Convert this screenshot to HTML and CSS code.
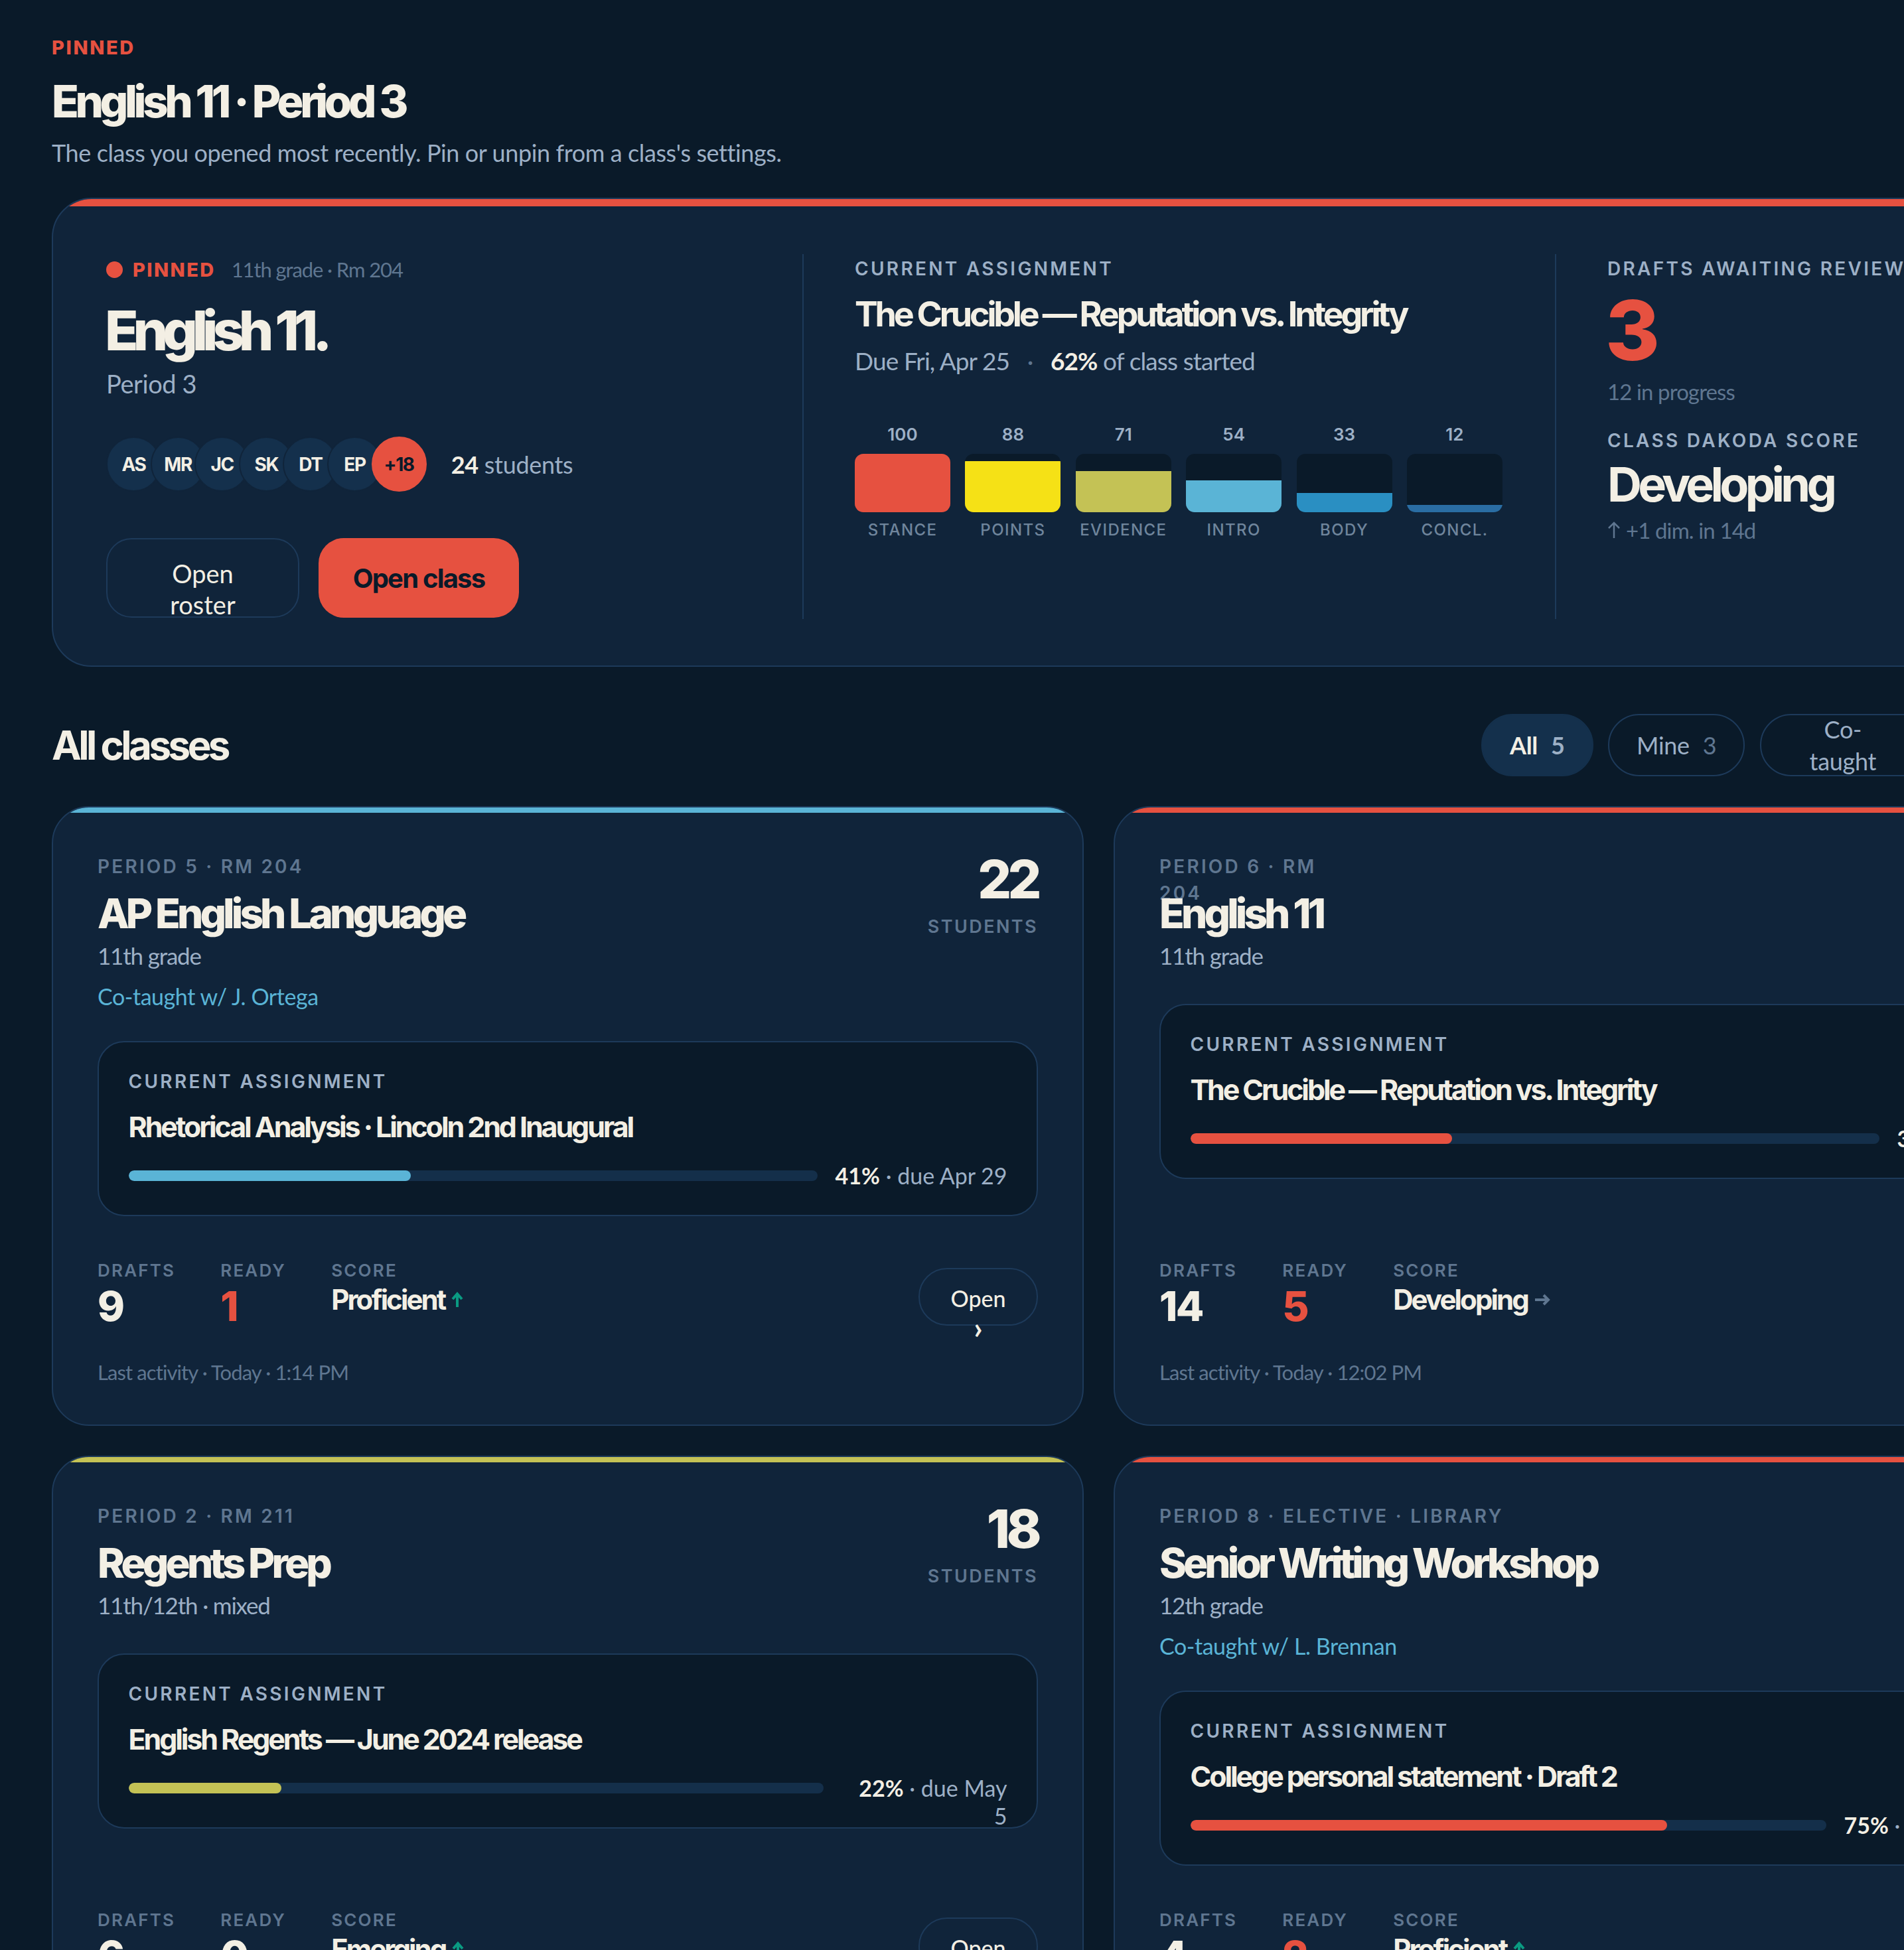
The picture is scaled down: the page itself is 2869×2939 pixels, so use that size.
FILE: index.html
```html
<!DOCTYPE html>
<html lang="en">
<head>
  <meta charset="UTF-8" />
  <title>Classes</title>
  <link rel="stylesheet" href="styles.css">
</head>
<body>
  <div class="page">
    <!-- Pinned header -->
    <div class="eyebrow">PINNED</div>
    <h1 class="page-title">English 11 · Period 3</h1>
    <p class="page-sub">The class you opened most recently. Pin or unpin from a class's settings.</p>

    <!-- Pinned class -->
    <section class="hero">
      <div class="hero-col hero-main">
        <div class="pin-row">
          <span class="pin-dot"></span>
          <span class="pin-label">PINNED</span>
          <span class="pin-meta">11th grade · Rm 204</span>
        </div>
        <h2 class="hero-title">English 11.</h2>
        <div class="hero-period">Period 3</div>
        <div class="roster">
          <div class="avatars">
            <span class="avatar">AS</span>
            <span class="avatar">MR</span>
            <span class="avatar">JC</span>
            <span class="avatar">SK</span>
            <span class="avatar">DT</span>
            <span class="avatar">EP</span>
            <span class="avatar avatar-more">+18</span>
          </div>
          <div class="roster-count"><strong>24</strong> students</div>
        </div>
        <div class="hero-actions">
          <button class="btn-ghost">Open roster</button>
          <button class="btn-primary">Open class</button>
        </div>
      </div>

      <div class="hero-col hero-assign">
        <div class="label">CURRENT ASSIGNMENT</div>
        <div class="assign-title">The Crucible — Reputation vs. Integrity</div>
        <div class="assign-due">Due Fri, Apr 25 <span class="sep">·</span> <strong>62%</strong> of class started</div>
        <div class="bars">
          <div class="bar-col">
            <div class="bar-num">100</div>
            <div class="bar-track"><div class="bar-fill fill-stance" style="height:100%"></div></div>
            <div class="bar-name">STANCE</div>
          </div>
          <div class="bar-col">
            <div class="bar-num">88</div>
            <div class="bar-track"><div class="bar-fill fill-points" style="height:88%"></div></div>
            <div class="bar-name">POINTS</div>
          </div>
          <div class="bar-col">
            <div class="bar-num">71</div>
            <div class="bar-track"><div class="bar-fill fill-evidence" style="height:71%"></div></div>
            <div class="bar-name">EVIDENCE</div>
          </div>
          <div class="bar-col">
            <div class="bar-num">54</div>
            <div class="bar-track"><div class="bar-fill fill-intro" style="height:54%"></div></div>
            <div class="bar-name">INTRO</div>
          </div>
          <div class="bar-col">
            <div class="bar-num">33</div>
            <div class="bar-track"><div class="bar-fill fill-body" style="height:33%"></div></div>
            <div class="bar-name">BODY</div>
          </div>
          <div class="bar-col">
            <div class="bar-num">12</div>
            <div class="bar-track"><div class="bar-fill fill-concl" style="height:12%"></div></div>
            <div class="bar-name">CONCL.</div>
          </div>
        </div>
      </div>

      <div class="hero-col hero-side">
        <div class="label">DRAFTS AWAITING REVIEW</div>
        <div class="big-num">3</div>
        <div class="side-note">12 in progress</div>
        <div class="label label-score">CLASS DAKODA SCORE</div>
        <div class="side-score">Developing</div>
        <div class="side-note side-trend">
          <svg class="trend-up" viewBox="0 0 20 26"><path d="M10 25V2M2 10l8-8 8 8"/></svg>
          +1 dim. in 14d
        </div>
      </div>
    </section>

    <!-- All classes -->
    <div class="list-head">
      <h2 class="list-title">All classes</h2>
      <div class="pills">
        <span class="pill pill-on">All <em>5</em></span>
        <span class="pill">Mine <em>3</em></span>
        <span class="pill pill-wrap"><span>Co-<br>taught</span> <em>2</em></span>
      </div>
    </div>

    <div class="grid">
      <article class="card card-blue">
        <div class="card-head">
          <div>
            <div class="card-meta">PERIOD 5 · RM 204</div>
            <h3 class="card-title">AP English Language</h3>
            <div class="card-grade">11th grade</div>
            <div class="card-co">Co-taught w/ J. Ortega</div>
          </div>
          <div class="card-count">
            <div class="count-num">22</div>
            <div class="count-label">STUDENTS</div>
          </div>
        </div>
        <div class="assign-box">
          <div class="label">CURRENT ASSIGNMENT</div>
          <div class="box-title">Rhetorical Analysis · Lincoln 2nd Inaugural</div>
          <div class="progress-row">
            <div class="progress"><div class="progress-fill fill-intro" style="width:41%"></div></div>
            <div class="progress-text"><strong>41%</strong> · due Apr 29</div>
          </div>
        </div>
        <div class="card-foot">
          <div class="foot-row">
            <div class="stats">
              <div><div class="stat-label">DRAFTS</div><div class="stat-num">9</div></div>
              <div><div class="stat-label">READY</div><div class="stat-num stat-red">1</div></div>
              <div>
                <div class="stat-label">SCORE</div>
                <div class="stat-score">Proficient
                  <svg class="arrow arrow-up" viewBox="0 0 18 24"><path d="M9 23V4M2 11l7-8 7 8"/></svg>
                </div>
              </div>
            </div>
            <button class="btn-open">Open<br><span class="chev">›</span></button>
          </div>
          <div class="last-activity">Last activity · Today · 1:14 PM</div>
        </div>
      </article>

      <article class="card card-red">
        <div class="card-head">
          <div>
            <div class="card-meta">PERIOD 6 · RM<br>204</div>
            <h3 class="card-title">English 11</h3>
            <div class="card-grade">11th grade</div>
          </div>
          <div class="card-count">
            <div class="count-num">24</div>
            <div class="count-label">STUDENTS</div>
          </div>
        </div>
        <div class="assign-box">
          <div class="label">CURRENT ASSIGNMENT</div>
          <div class="box-title">The Crucible — Reputation vs. Integrity</div>
          <div class="progress-row">
            <div class="progress"><div class="progress-fill fill-stance" style="width:38%"></div></div>
            <div class="progress-text"><strong>38%</strong> · due Apr 25</div>
          </div>
        </div>
        <div class="card-foot">
          <div class="foot-row">
            <div class="stats">
              <div><div class="stat-label">DRAFTS</div><div class="stat-num">14</div></div>
              <div><div class="stat-label">READY</div><div class="stat-num stat-red">5</div></div>
              <div>
                <div class="stat-label">SCORE</div>
                <div class="stat-score">Developing
                  <svg class="arrow arrow-right" viewBox="0 0 24 18"><path d="M1 9h20M14 2l7 7-7 7"/></svg>
                </div>
              </div>
            </div>
            <button class="btn-open">Open<br><span class="chev">›</span></button>
          </div>
          <div class="last-activity">Last activity · Today · 12:02 PM</div>
        </div>
      </article>

      <article class="card card-olive">
        <div class="card-head">
          <div>
            <div class="card-meta">PERIOD 2 · RM 211</div>
            <h3 class="card-title">Regents Prep</h3>
            <div class="card-grade">11th/12th · mixed</div>
          </div>
          <div class="card-count">
            <div class="count-num">18</div>
            <div class="count-label">STUDENTS</div>
          </div>
        </div>
        <div class="assign-box">
          <div class="label">CURRENT ASSIGNMENT</div>
          <div class="box-title">English Regents — June 2024 release</div>
          <div class="progress-row">
            <div class="progress"><div class="progress-fill fill-evidence" style="width:22%"></div></div>
            <div class="progress-text progress-wrapped"><strong>22%</strong> · due May<br>5</div>
          </div>
        </div>
        <div class="card-foot">
          <div class="foot-row">
            <div class="stats">
              <div><div class="stat-label">DRAFTS</div><div class="stat-num">6</div></div>
              <div><div class="stat-label">READY</div><div class="stat-num">0</div></div>
              <div>
                <div class="stat-label">SCORE</div>
                <div class="stat-score">Emerging
                  <svg class="arrow arrow-up" viewBox="0 0 18 24"><path d="M9 23V4M2 11l7-8 7 8"/></svg>
                </div>
              </div>
            </div>
            <button class="btn-open">Open<br><span class="chev">›</span></button>
          </div>
          <div class="last-activity">Last activity · Yesterday</div>
        </div>
      </article>

      <article class="card card-red">
        <div class="card-head">
          <div>
            <div class="card-meta">PERIOD 8 · ELECTIVE · LIBRARY</div>
            <h3 class="card-title">Senior Writing Workshop</h3>
            <div class="card-grade">12th grade</div>
            <div class="card-co">Co-taught w/ L. Brennan</div>
          </div>
          <div class="card-count">
            <div class="count-num">14</div>
            <div class="count-label">STUDENTS</div>
          </div>
        </div>
        <div class="assign-box">
          <div class="label">CURRENT ASSIGNMENT</div>
          <div class="box-title">College personal statement · Draft 2</div>
          <div class="progress-row">
            <div class="progress"><div class="progress-fill fill-stance" style="width:75%"></div></div>
            <div class="progress-text progress-long"><strong>75%</strong> · due May 16</div>
          </div>
        </div>
        <div class="card-foot">
          <div class="foot-row">
            <div class="stats">
              <div><div class="stat-label">DRAFTS</div><div class="stat-num">4</div></div>
              <div><div class="stat-label">READY</div><div class="stat-num stat-red">2</div></div>
              <div>
                <div class="stat-label">SCORE</div>
                <div class="stat-score">Proficient
                  <svg class="arrow arrow-up" viewBox="0 0 18 24"><path d="M9 23V4M2 11l7-8 7 8"/></svg>
                </div>
              </div>
            </div>
            <button class="btn-open">Open<br><span class="chev">›</span></button>
          </div>
          <div class="last-activity">Last activity · Yesterday</div>
        </div>
      </article>
    </div>
  </div>
</body>
</html>
```

FILE: styles.css
```css
body {
  margin: 0;
  height: 100vh;
  overflow: hidden;
  background: #0a1a29;
  color: #f3efe4;
  font-family: "Lato", sans-serif;
}
h1, h2, h3, p {
  margin: 0;
  font-weight: 700;
}
strong {
  color: #f3efe4;
  font-weight: 700;
}
.page {
  width: 3154px;
  padding: 52px 0 0 78px;
}
/* Pinned header */
.eyebrow {
  font-family: "Inter", sans-serif;
  font-size: 29px;
  line-height: 40px;
  font-weight: 800;
  letter-spacing: 2.6px;
  color: #e65140;
}
.page-title {
  margin-top: 22px;
  font-family: "Inter", sans-serif;
  font-size: 67px;
  line-height: 78px;
  font-weight: 800;
  letter-spacing: -5.4px;
}
.page-sub {
  margin-top: 16px;
  font-size: 36px;
  line-height: 44px;
  font-weight: 400;
  letter-spacing: -0.4px;
  color: #9db0c6;
}
/* Pinned class */
.hero {
  position: relative;
  box-sizing: border-box;
  height: 707px;
  margin-top: 46px;
  padding: 83px 80px 70px;
  display: grid;
  grid-template-columns: 1049px 1134px 1fr;
  background: #10243a;
  border: 2.5px solid #1d3a5a;
  border-radius: 60px;
  overflow: hidden;
}
.hero::before {
  content: "";
  position: absolute;
  top: 0;
  left: 0;
  right: 0;
  height: 11px;
  background: #e65140;
}
.hero-assign, .hero-side {
  border-left: 2.5px solid #1d3a5a;
  padding-left: 77px;
}
.hero-assign {
  padding-right: 79px;
}
.pin-row {
  display: flex;
  align-items: center;
  height: 46px;
}
.pin-dot {
  width: 25px;
  height: 25px;
  border-radius: 50%;
  background: #e65140;
}
.pin-label {
  margin-left: 15px;
  font-family: "Inter", sans-serif;
  font-size: 29px;
  font-weight: 800;
  letter-spacing: 2.4px;
  color: #e65140;
}
.pin-meta {
  margin-left: 24px;
  font-size: 31px;
  letter-spacing: -1.1px;
  color: #5f7690;
}
.hero-title {
  margin-top: 25px;
  margin-left: -2px;
  font-family: "Inter", sans-serif;
  font-size: 83px;
  line-height: 89px;
  font-weight: 800;
  letter-spacing: -8.2px;
}
.hero-period {
  margin-top: 12px;
  font-size: 38px;
  line-height: 46px;
  letter-spacing: -0.4px;
  color: #9db0c6;
}
.roster {
  display: flex;
  align-items: center;
  margin-top: 57px;
}
.avatars {
  display: flex;
}
.avatar {
  box-sizing: border-box;
  width: 83px;
  height: 83px;
  margin-right: -16.4px;
  display: flex;
  align-items: center;
  justify-content: center;
  border-radius: 50%;
  border: 2.5px solid #10243a;
  background: #14304c;
  font-family: "Inter", sans-serif;
  font-size: 28px;
  font-weight: 700;
  letter-spacing: -1.4px;
}
.avatar-more {
  margin-right: 0;
  border-color: #e65140;
  background: #e65140;
  color: #0a1a29;
}
.roster-count {
  margin-left: 37px;
  font-size: 36px;
  letter-spacing: -0.3px;
  color: #9db0c6;
}
.hero-actions {
  display: flex;
  gap: 29px;
  margin-top: 70px;
}
.btn-ghost, .btn-primary {
  box-sizing: border-box;
  height: 120px;
  border-radius: 38px;
  font-size: 38px;
  line-height: 47px;
}
.btn-ghost {
  width: 291px;
  padding: 28px 66px 0;
  background: transparent;
  border: 2.5px solid #1d3a5a;
  color: #f3efe4;
  font-family: "Lato", sans-serif;
}
.btn-primary {
  width: 302px;
  padding: 0;
  border: none;
  background: #e65140;
  color: #0a1a29;
  font-family: "Inter", sans-serif;
  font-size: 40px;
  font-weight: 700;
  letter-spacing: -1.8px;
}
.label {
  font-family: "Inter", sans-serif;
  font-size: 28px;
  line-height: 44px;
  font-weight: 600;
  letter-spacing: 3.3px;
  color: #9db0c6;
  white-space: nowrap;
}
.assign-title {
  margin-top: 15px;
  font-family: "Inter", sans-serif;
  font-size: 52px;
  line-height: 64px;
  font-weight: 700;
  letter-spacing: -4.2px;
}
.assign-due {
  margin-top: 15px;
  font-size: 37px;
  line-height: 46px;
  letter-spacing: -0.9px;
  color: #9db0c6;
}
.sep {
  margin: 0 18px;
  color: #5f7690;
}
.bars {
  display: flex;
  gap: 22.4px;
  margin-top: 70px;
}
.bar-col {
  width: 144px;
  text-align: center;
}
.bar-num {
  font-family: "Inter", sans-serif;
  font-size: 26px;
  line-height: 36px;
  font-weight: 600;
  color: #9db0c6;
}
.bar-track {
  display: flex;
  align-items: flex-end;
  height: 88px;
  margin-top: 11px;
  background: #0a1a29;
  border-radius: 13px;
  overflow: hidden;
}
.bar-fill {
  width: 100%;
}
.bar-name {
  margin-top: 11px;
  font-family: "Inter", sans-serif;
  font-size: 24px;
  line-height: 32px;
  font-weight: 500;
  letter-spacing: 1.4px;
  color: #6f859c;
}
.fill-stance { background: #e65140; }
.fill-points { background: #f5e116; }
.fill-evidence { background: #c4c255; }
.fill-intro { background: #5ab4d6; }
.fill-body { background: #2a8fc2; }
.fill-concl { background: #2a6da3; }
.big-num {
  margin-top: 8px;
  margin-left: -3px;
  font-family: "Inter", sans-serif;
  font-size: 125px;
  line-height: 125px;
  font-weight: 800;
  color: #e65140;
}
.side-note {
  margin-top: 8px;
  font-size: 33px;
  line-height: 44px;
  letter-spacing: -0.9px;
  color: #5f7690;
}
.label-score {
  margin-top: 30px;
}
.side-score {
  margin-top: 2px;
  font-family: "Inter", sans-serif;
  font-size: 72px;
  line-height: 84px;
  font-weight: 700;
  letter-spacing: -5.7px;
}
.side-trend {
  display: flex;
  align-items: center;
  gap: 8px;
  margin-top: 5px;
}
.trend-up {
  width: 20px;
  height: 26px;
  fill: none;
  stroke: #5f7690;
  stroke-width: 2.5;
}
/* All classes */
.list-head {
  display: flex;
  align-items: center;
  margin-top: 71px;
}
.list-title {
  flex: 1;
  font-family: "Inter", sans-serif;
  font-size: 60px;
  line-height: 94px;
  letter-spacing: -4.5px;
}
.pills {
  display: flex;
  gap: 22.5px;
  width: 1000px;
}
.pill {
  box-sizing: border-box;
  height: 94px;
  display: flex;
  align-items: center;
  gap: 20px;
  padding: 0 41px;
  border: 2.5px solid #1d3a5a;
  border-radius: 47px;
  font-size: 36px;
  line-height: 48px;
  letter-spacing: -0.3px;
  color: #9db0c6;
  white-space: nowrap;
}
.pill em {
  font-style: normal;
  color: #5f7690;
}
.pill-on {
  background: #14304c;
  border-color: #14304c;
  color: #f3efe4;
  font-weight: 700;
}
.pill-on em {
  color: #9db0c6;
}
.pill-wrap span {
  width: 164px;
  text-align: center;
}
.grid {
  display: grid;
  grid-template-columns: repeat(2, 1555px);
  gap: 45px;
  margin-top: 45px;
}
.card {
  position: relative;
  box-sizing: border-box;
  display: flex;
  flex-direction: column;
  padding: 69px 67px 59px;
  background: #10243a;
  border: 2.5px solid #1d3a5a;
  border-radius: 56px;
  overflow: hidden;
}
.card::before {
  content: "";
  position: absolute;
  top: 0;
  left: 0;
  right: 0;
  height: 8px;
}
.card-blue::before { background: #5ab4d6; }
.card-red::before { background: #e65140; }
.card-olive::before { background: #c4c255; }
.card-head {
  display: flex;
  justify-content: space-between;
  margin-bottom: 52px;
}
.card-meta {
  height: 40px;
  font-family: "Inter", sans-serif;
  font-size: 28px;
  line-height: 40px;
  font-weight: 600;
  letter-spacing: 3.2px;
  color: #5f7690;
}
.card-title {
  position: relative;
  margin-top: 15px;
  font-family: "Inter", sans-serif;
  font-size: 62px;
  line-height: 72px;
  font-weight: 800;
  letter-spacing: -4.9px;
}
.card-grade {
  margin-top: 6px;
  font-size: 35px;
  line-height: 42px;
  letter-spacing: -1.2px;
  color: #9db0c6;
}
.card-co {
  margin-top: 26px;
  font-size: 34px;
  line-height: 30px;
  letter-spacing: -0.45px;
  color: #5ab4d6;
}
.card-count {
  padding-top: 3px;
  text-align: right;
}
.count-num {
  font-family: "Inter", sans-serif;
  font-size: 80px;
  line-height: 72px;
  font-weight: 800;
  letter-spacing: -5.6px;
}
.count-label {
  margin-top: 18px;
  font-family: "Inter", sans-serif;
  font-size: 27px;
  line-height: 36px;
  font-weight: 600;
  letter-spacing: 2.4px;
  color: #5f7690;
}
.assign-box {
  box-sizing: border-box;
  height: 264px;
  margin-bottom: 64px;
  padding: 39px 44.5px 0;
  background: #0a1a29;
  border: 2.5px solid #1d3a5a;
  border-radius: 40px;
}
.assign-box .label {
  line-height: 40px;
}
.box-title {
  margin-top: 19px;
  font-family: "Inter", sans-serif;
  font-size: 43px;
  line-height: 58px;
  font-weight: 700;
  letter-spacing: -3.1px;
}
.progress-row {
  display: flex;
  gap: 27px;
  margin-top: 24px;
}
.progress {
  flex: 1;
  height: 16px;
  margin-top: 13px;
  background: #142f4a;
  border-radius: 8px;
  overflow: hidden;
}
.progress-fill {
  height: 100%;
  border-radius: 8px;
}
.progress-text {
  height: 42px;
  font-size: 34px;
  line-height: 42px;
  color: #9db0c6;
  text-align: right;
  white-space: nowrap;
}
.progress-wrapped {
  width: 250px;
}
.progress-long {
  width: 339px;
  text-align: left;
}
.card-foot {
  margin-top: auto;
}
.foot-row {
  display: flex;
  justify-content: space-between;
  align-items: flex-start;
}
.stats {
  display: flex;
  gap: 68px;
}
.stat-label {
  font-family: "Inter", sans-serif;
  font-size: 26px;
  line-height: 36px;
  font-weight: 600;
  letter-spacing: 2.2px;
  color: #5f7690;
}
.stat-num {
  font-family: "Inter", sans-serif;
  font-size: 62px;
  line-height: 72px;
  font-weight: 800;
  letter-spacing: -2.6px;
}
.stat-red {
  color: #e65140;
}
.stat-score {
  display: flex;
  align-items: center;
  gap: 10px;
  font-family: "Inter", sans-serif;
  font-size: 42px;
  line-height: 52px;
  font-weight: 700;
  letter-spacing: -2.9px;
}
.arrow {
  fill: none;
  stroke-width: 4;
}
.arrow-up {
  width: 18px;
  height: 24px;
  stroke: #0a9a82;
}
.arrow-right {
  width: 24px;
  height: 18px;
  stroke: #5f7690;
}
.btn-open {
  box-sizing: border-box;
  width: 180px;
  height: 87px;
  margin-top: 14px;
  padding: 22px 0 0;
  display: block;
  background: transparent;
  border: 2.5px solid #1d3a5a;
  border-radius: 43px;
  color: #f3efe4;
  font-family: "Lato", sans-serif;
  font-size: 34px;
  line-height: 44px;
  font-weight: 500;
  overflow: visible;
}
.chev {
  font-size: 46px;
  font-weight: 700;
}
.last-activity {
  margin-top: 43px;
  font-size: 31px;
  line-height: 40px;
  letter-spacing: -0.9px;
  color: #5f7690;
}
```
